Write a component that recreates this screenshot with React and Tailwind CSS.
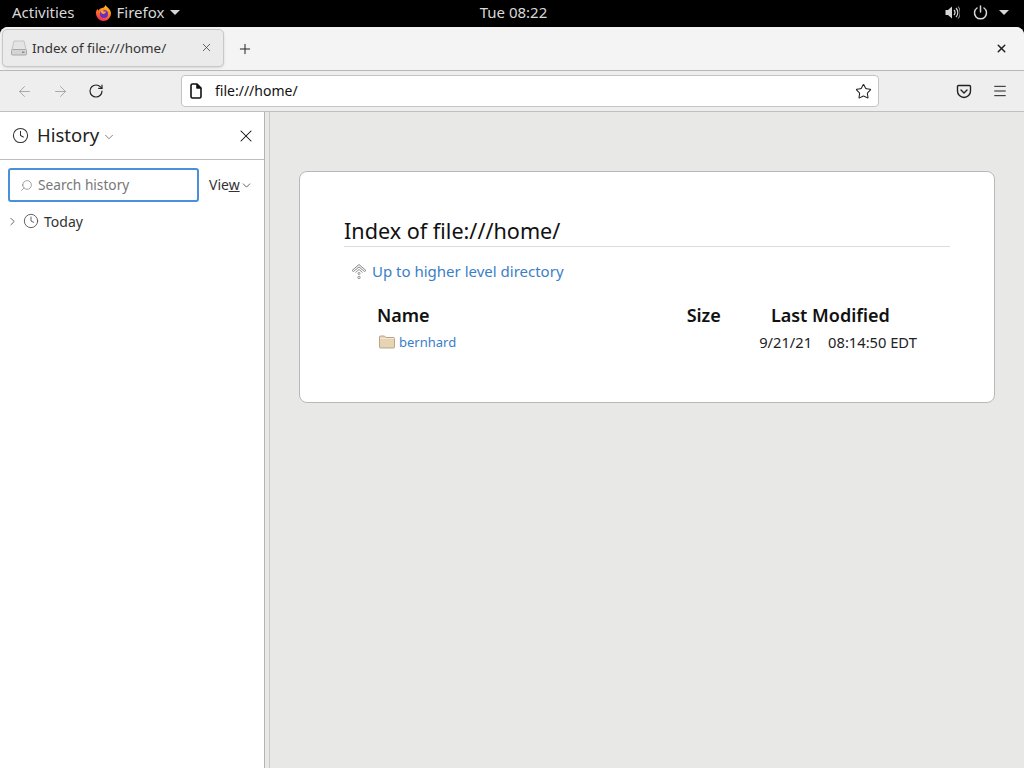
import { Plus, X, ArrowLeft, ArrowRight, RotateCw, Star, Menu, ChevronDown, ChevronRight, Clock, Search } from "lucide-react"

function FirefoxLogo() {
  return (
    <svg width="17" height="18" viewBox="0 0 18 18" className="block">
      <defs>
        <linearGradient id="ff" x1="0.7" y1="0" x2="0.3" y2="1">
          <stop offset="0" stopColor="#ffc51f" />
          <stop offset="0.5" stopColor="#ff7a1f" />
          <stop offset="1" stopColor="#f0265f" />
        </linearGradient>
      </defs>
      <path d="M9 17.500a8 8 0 0 1-8-8c0-2 .5-3.500 1.500-4.800L3.800 6.500C4.500 5 6 4 7.500 3.800 9 3.400 11 2 11 .500c1 1.500 2.500 2.500 3.800 4 1.300 1.500 2.200 3 2.200 5a8 8 0 0 1-8 8z" fill="url(#ff)" />
      <circle cx="9.500" cy="10" r="4.300" fill="#6a2fc0" />
      <path d="M6.200 5.800c1.500-.8 3-.6 4.300.2-1.200-.1-2 .4-2.300 1 1.200.6 2.300.7 3.300.2.200 1.500-1 2.700-2.500 2.800-1.500.1-2.600-1-2.800-2.400-.1-.7 0-1.300 0-1.800z" fill="#ff9a2e" />
    </svg>
  )
}

function FileIcon() {
  return (
    <svg width="14" height="16" viewBox="0 0 14 16" fill="none" stroke="#111" strokeWidth="1.600" strokeLinejoin="round" className="block">
      <path d="M2 2.500a1.500 1.500 0 0 1 1.500-1.500H8l4 4v8.500a1.500 1.500 0 0 1-1.500 1.500h-7A1.500 1.500 0 0 1 2 13.500z" />
      <path d="M8 1v4h4" fill="#111" />
    </svg>
  )
}

function DriveIcon() {
  return (
    <svg width="16" height="16" viewBox="0 0 16 16" className="block">
      <path d="M3 1h10l2 8.500H1z" fill="#e4e4e4" stroke="#c4c4c4" />
      <rect x="0.500" y="9.500" width="15" height="5.500" rx="1" fill="#d4d4d4" stroke="#a8a8a8" />
      <rect x="11" y="11.500" width="2.500" height="1.500" fill="#8c8c8c" />
    </svg>
  )
}

function PocketIcon() {
  return (
    <svg width="16" height="15" viewBox="0 0 16 15" fill="none" stroke="#222" strokeWidth="1.400" strokeLinecap="round" strokeLinejoin="round" className="block">
      <path d="M2.500 1.500h11a1 1 0 0 1 1 1v4.500a6.500 6.500 0 0 1-13 0V2.500a1 1 0 0 1 1-1z" />
      <path d="M5 6l3 3 3-3" />
    </svg>
  )
}

function SpeakerIcon() {
  return (
    <svg width="15" height="15" viewBox="0 0 15 15" fill="none" className="block">
      <path d="M0.500 5h2.500l4-3.500v12L3 10H0.500z" fill="#d6d6d6" />
      <path d="M9 5a3.500 3.500 0 0 1 0 5" stroke="#d6d6d6" strokeWidth="1.300" />
      <path d="M11 3a6.500 6.500 0 0 1 0 9" stroke="#d6d6d6" strokeWidth="1.200" />
      <path d="M13 1.500a9 9 0 0 1 0 12" stroke="#8a8a8a" strokeWidth="1.100" />
    </svg>
  )
}

function PowerIcon() {
  return (
    <svg width="15" height="15" viewBox="0 0 15 15" fill="none" stroke="#d6d6d6" strokeWidth="1.500" strokeLinecap="round" className="block">
      <path d="M7.500 1v6" />
      <path d="M4 3a6 6 0 1 0 7 0" />
    </svg>
  )
}

function UpIcon() {
  return (
    <svg width="16" height="17" viewBox="0 0 16 17" fill="none" stroke="#8f8f8f" strokeWidth="1" className="block">
      <path d="M1 7.500L8 1.500l7 6-1.500 1L8 4 2.500 8.500z" fill="#f2f2f2" />
      <path d="M4.500 9.500L8 6.500l3.500 3" />
      <circle cx="8" cy="10.500" r="1" />
      <circle cx="8" cy="14.500" r="1.200" />
    </svg>
  )
}

function FolderIcon() {
  return (
    <svg width="16" height="14" viewBox="0 0 16 14" className="block">
      <path d="M0.500 2a1 1 0 0 1 1-1h4l1.500 1.500h7.500a1 1 0 0 1 1 1V12a1 1 0 0 1-1 1h-13a1 1 0 0 1-1-1z" fill="#e6d4b5" stroke="#b8a586" />
      <path d="M1 3.500h14" stroke="#f3e8d3" />
    </svg>
  )
}

function Caret() {
  return <span className="block w-0 h-0 border-x-[5px] border-x-transparent border-t-[5px] border-t-[#d6d6d6]" />
}

export default function App() {
  return (
    <div className="w-[1024px] h-[768px] flex flex-col overflow-hidden bg-black font-['Noto_Sans',sans-serif] text-[#111]">
      {/* gnome top bar */}
      <div className="h-[27px] shrink-0 grid grid-cols-3 items-center pl-3 pr-3 pb-[2px] text-[15px] text-[#d8d8d8]">
        <div className="flex items-center">
          <span>Activities</span>
          <span className="ml-5"><FirefoxLogo /></span>
          <span className="ml-[5px]">Firefox</span>
          <span className="ml-[6px]"><Caret /></span>
        </div>
        <div className="text-center pl-[3px]">Tue 08:22</div>
        <div className="flex items-center justify-end pr-[3px]">
          <SpeakerIcon />
          <span className="ml-[13px]"><PowerIcon /></span>
          <span className="ml-[11px]"><Caret /></span>
        </div>
      </div>

      <div className="flex-1 flex flex-col rounded-t-[8px] overflow-hidden bg-[#e8e8e6]">
        {/* tab strip */}
        <div className="h-[44px] shrink-0 flex items-center bg-[#f4f4f4] border-b border-[#b8b8b8] pl-[2px] pr-4">
          <div className="w-[222px] h-[38px] mt-[-2px] flex items-center bg-[#ebebeb] border border-[#c8c8c8] rounded-[5px] shadow-sm pl-2 pr-[10px]">
            <DriveIcon />
            <span className="ml-[5px] mt-[1px] text-[13.400px] text-[#333]">Index of file:///home/</span>
            <X size={13} strokeWidth={1.5} className="ml-auto text-[#444]" />
          </div>
          <Plus size={16} strokeWidth={1.5} className="ml-[13px] text-[#222]" />
          <X size={13} strokeWidth={2.75} className="ml-auto text-[#222]" />
        </div>

        {/* nav toolbar */}
        <div className="h-[41px] shrink-0 flex items-center bg-[#eeeeee] border-b border-[#c0c0c0] pl-4 pr-4">
          <ArrowLeft size={17} strokeWidth={1.25} className="text-[#a0a0a0]" />
          <ArrowRight size={17} strokeWidth={1.25} className="ml-[19px] text-[#a0a0a0]" />
          <RotateCw size={16} strokeWidth={1.75} className="ml-[19px] text-[#222]" />
          <div className="ml-[77px] w-[698px] h-[32px] flex items-center bg-white border border-[#c4c4c4] rounded-[4px] pl-[7px] pr-[6px]">
            <FileIcon />
            <span className="ml-[12px] text-[14px] text-[#111] mt-[-1px]">file:///home/</span>
            <Star size={17} strokeWidth={1.5} className="ml-auto text-[#222]" />
          </div>
          <span className="ml-[77px]"><PocketIcon /></span>
          <Menu size={16} strokeWidth={1.5} className="ml-[20px] text-[#222]" />
        </div>

        <div className="flex-1 flex min-h-0">
          {/* history sidebar */}
          <div className="w-[265px] shrink-0 bg-white border-r border-[#b4b4b4]">
            <div className="h-[48px] flex items-center border-b border-[#bdbdbd] pl-[12px] pr-[8px]">
              <Clock size={17} strokeWidth={1.5} className="text-[#333]" />
              <span className="ml-2 mt-[-2px] text-[18.500px] text-[#222]">History</span>
              <ChevronDown size={14} strokeWidth={1.25} className="ml-[3px] mt-[2px] text-[#555]" />
              <X size={20} strokeWidth={1.25} className="ml-auto text-[#111]" />
            </div>
            <div className="flex items-center pl-[8px] pt-[8px]">
              <div className="w-[191px] h-[34px] flex items-center rounded-[3px] border-2 border-[#4a90d9] pl-[10px]">
                <Search size={13} strokeWidth={1.25} className="text-[#777] -scale-x-100" />
                <span className="ml-[5px] text-[13.700px] text-[#777]">Search history</span>
              </div>
              <span className="ml-[10px] text-[14px] text-[#333] mt-[-1px]">Vie<span className="underline">w</span></span>
              <ChevronDown size={13} strokeWidth={1.5} className="text-[#444]" />
            </div>
            <div className="flex items-center pl-[6px] mt-[8px] h-[22px]">
              <ChevronRight size={13} strokeWidth={1.5} className="text-[#444]" />
              <Clock size={16} strokeWidth={1.25} className="ml-[4px] text-[#444]" />
              <span className="ml-[5px] text-[14px] text-[#333]">Today</span>
            </div>
          </div>

          {/* directory listing */}
          <div className="flex-1 bg-[#e8e8e6] pl-[4px]">
            <div className="h-full border-l border-[#c8c8c8] pl-[29px] pt-[59px]">
              <div className="w-[696px] h-[232px] bg-white border border-[#b8b8b8] rounded-[8px] pl-[44px] pr-[44px] pt-[42px]">
                <h1 className="h-[33px] border-b border-[#dcdcdc] text-[21.600px] leading-[33px] text-[#111]">Index of file:///home/</h1>
                <div className="flex items-center mt-[14px] pl-[7px] h-[20px]">
                  <UpIcon />
                  <span className="ml-[5px] text-[15px] text-[#3a7ec9]">Up to higher level directory</span>
                </div>
                <div className="flex items-center mt-[22px] h-[24px] text-[18px] font-semibold text-[#111]">
                  <span className="ml-[33px]">Name</span>
                  <span className="ml-[257px]">Size</span>
                  <span className="ml-[50px]">Last Modified</span>
                </div>
                <div className="flex items-center mt-[5px] h-[20px]">
                  <span className="ml-[35px]"><FolderIcon /></span>
                  <span className="ml-[4px] mt-[2px] text-[13px] text-[#3a7ec9]">bernhard</span>
                  <span className="ml-[303px] text-[14.700px] text-[#222]">9/21/21</span>
                  <span className="ml-[16px] text-[14.700px] text-[#222]">08:14:50 EDT</span>
                </div>
              </div>
            </div>
          </div>
        </div>
      </div>
    </div>
  )
}
